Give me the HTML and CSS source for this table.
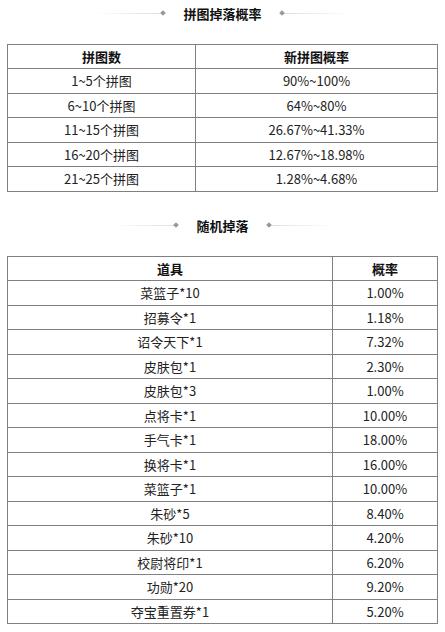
FILE: index.html
```html
<!DOCTYPE html>
<html lang="zh-CN">

<head>
    <meta charset="UTF-8">
    <meta name="viewport" content="width=device-width, initial-scale=1.0">
    <title>拼图掉落概率</title>
    <link rel="stylesheet" href="styles.css">
</head>

<body>
    <div class="section-title">
        <span class="line left"><i class="dot"></i></span>
        <h2>拼图掉落概率</h2>
        <span class="line right"><i class="dot"></i></span>
    </div>
    <table class="rate-table puzzle">
        <tr>
            <th class="col-a">拼图数</th>
            <th>新拼图概率</th>
        </tr>
        <tr><td>1~5个拼图</td><td>90%~100%</td></tr>
        <tr><td>6~10个拼图</td><td>64%~80%</td></tr>
        <tr><td>11~15个拼图</td><td>26.67%~41.33%</td></tr>
        <tr><td>16~20个拼图</td><td>12.67%~18.98%</td></tr>
        <tr><td>21~25个拼图</td><td>1.28%~4.68%</td></tr>
    </table>

    <div class="section-title second">
        <span class="line left"><i class="dot"></i></span>
        <h2>随机掉落</h2>
        <span class="line right"><i class="dot"></i></span>
    </div>
    <table class="rate-table drops">
        <tr>
            <th class="col-a">道具</th>
            <th>概率</th>
        </tr>
        <tr><td>菜篮子*10</td><td>1.00%</td></tr>
        <tr><td>招募令*1</td><td>1.18%</td></tr>
        <tr><td>诏令天下*1</td><td>7.32%</td></tr>
        <tr><td>皮肤包*1</td><td>2.30%</td></tr>
        <tr><td>皮肤包*3</td><td>1.00%</td></tr>
        <tr><td>点将卡*1</td><td>10.00%</td></tr>
        <tr><td>手气卡*1</td><td>18.00%</td></tr>
        <tr><td>换将卡*1</td><td>16.00%</td></tr>
        <tr><td>菜篮子*1</td><td>10.00%</td></tr>
        <tr><td>朱砂*5</td><td>8.40%</td></tr>
        <tr><td>朱砂*10</td><td>4.20%</td></tr>
        <tr><td>校尉将印*1</td><td>6.20%</td></tr>
        <tr><td>功勋*20</td><td>9.20%</td></tr>
        <tr><td>夺宝重置券*1</td><td>5.20%</td></tr>
    </table>
</body>

</html>
```

FILE: styles.css
```css
body {
    margin: 0;
    font-family: "Noto Sans CJK SC", "Noto Sans", sans-serif;
    font-size: 13px;
    color: #222;
    background: #fff;
}

.section-title {
    display: flex;
    justify-content: center;
    align-items: center;
    height: 26px;
    margin-bottom: 18px;
}

.section-title.second {
    margin-top: 20px;
}

.section-title h2 {
    margin: 0 18px;
    font-size: 13px;
    font-weight: bold;
    color: #111;
}

.line {
    display: flex;
    align-items: center;
    width: 72px;
    height: 1px;
}

.line.left {
    justify-content: flex-end;
    background: linear-gradient(to right, rgba(220, 220, 220, 0), #dcdcdc);
}

.line.right {
    justify-content: flex-start;
    background: linear-gradient(to left, rgba(220, 220, 220, 0), #dcdcdc);
}

.section-title.second .line {
    width: 66px;
}

.dot {
    display: block;
    width: 4px;
    height: 4px;
    background: #999;
    transform: rotate(45deg);
}

.rate-table {
    width: 431px;
    margin: 0 7px;
    border-collapse: collapse;
}

.rate-table th,
.rate-table td {
    height: 23px;
    padding: 0;
    border: 1px solid #808080;
    text-align: center;
    line-height: 16px;
}

/* every other row one pixel taller, like the original */
.rate-table tr:nth-child(even) td {
    height: 24px;
}

.rate-table th {
    font-weight: bold;
    color: #111;
}

.puzzle .col-a {
    width: 187px;
}

.drops .col-a {
    width: 324px;
}
```
